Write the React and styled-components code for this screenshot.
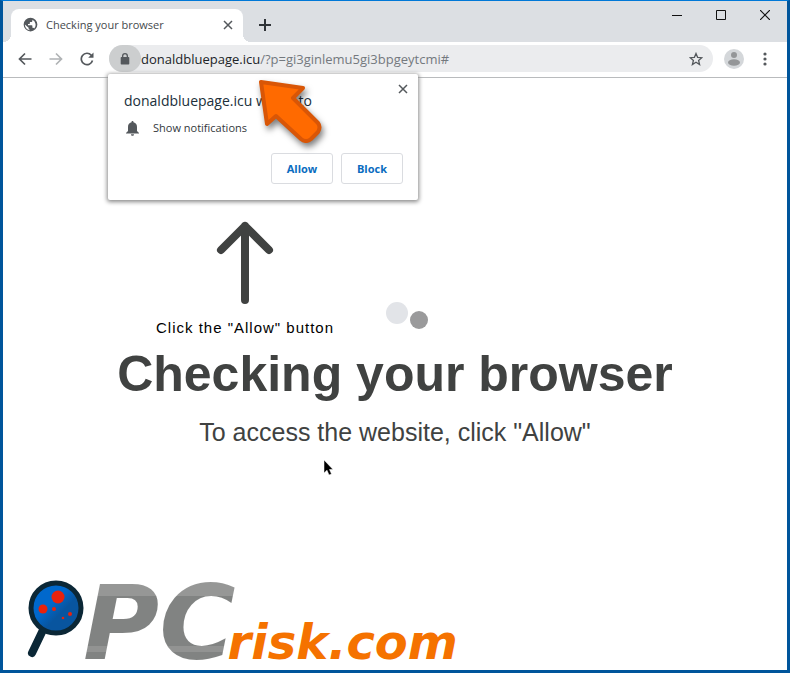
import React from 'react'
import styled, { createGlobalStyle } from 'styled-components'

const GlobalStyle = createGlobalStyle`
    * {
        box-sizing: border-box;
    }
    body {
        margin: 0;
        font-family: "Open Sans", "Noto Sans", sans-serif;
    }
    h1, h2, p {
        margin: 0;
    }
    button {
        font-family: inherit;
        padding: 0;
        border: none;
        background: none;
    }
    svg {
        display: block;
    }
`

const Window = styled.div`
    min-height: 100vh;
    display: flex;
    flex-direction: column;
    background-color: #ffffff;
    border: 3px solid #00559b;
    border-top: 1px solid #0078d7;
`

const TitleBar = styled.header`
    height: 41px;
    display: flex;
    align-items: flex-end;
    padding-left: 8px;
    background-color: #dcdfe3;
`

const Tab = styled.div`
    position: relative;
    width: 232px;
    height: 33px;
    display: flex;
    align-items: center;
    gap: 8px;
    padding: 0 7px 2px 12px;
    border-radius: 8px 8px 0 0;
    background-color: #ffffff;

    &::before,
    &::after {
        content: "";
        position: absolute;
        bottom: 0;
        width: 8px;
        height: 8px;
    }
    &::before {
        left: -8px;
        background: radial-gradient(circle at 0 0, transparent 8px, #ffffff 8px);
    }
    &::after {
        right: -8px;
        background: radial-gradient(circle at 100% 0, transparent 8px, #ffffff 8px);
    }
`

const TabTitle = styled.span`
    flex: 1;
    font-size: 11px;
    line-height: 16px;
    color: #45494d;
    white-space: nowrap;
`

const IconButton = styled.button`
    width: ${props => props.$width || 16}px;
    height: ${props => props.$height || 16}px;
    display: flex;
    align-items: center;
    justify-content: center;
    color: ${props => props.$color || '#54585c'};
`

const NewTab = styled(IconButton)`
    margin: 0 0 9px 14px;
`

const WindowButtons = styled.div`
    display: flex;
    align-self: flex-start;
    margin-left: auto;
`

const Toolbar = styled.div`
    height: 36px;
    display: flex;
    align-items: center;
    padding: 0 2px 2px 12px;
    border-bottom: 1px solid #b9bbbd;
`

const NavButtons = styled.nav`
    display: flex;
    gap: 11px;
`

const AddressBar = styled.div`
    position: relative;
    flex: 1;
    height: 27px;
    display: flex;
    align-items: center;
    margin: 0 10px 0 12px;
    padding-right: 8px;
    border-radius: 14px;
    background-color: #ebecee;
`

const SiteInfo = styled(IconButton)`
    border-radius: 14px;
    background-color: #cccecf;
`

const Url = styled.span`
    flex: 1;
    font-size: 13px;
    line-height: 20px;
    color: #74797e;
    white-space: nowrap;
`

const Host = styled.span`
    color: #202428;
`

const Prompt = styled.section`
    position: absolute;
    z-index: 1;
    top: 29px;
    left: -1px;
    width: 310px;
    padding: 16px 15px 16px 16px;
    border-radius: 2px;
    background-color: #ffffff;
    box-shadow: 0 1px 4px 1px #8a8a8a;
`

const PromptTitle = styled.h2`
    font-size: 14px;
    font-weight: 400;
    line-height: 22px;
    color: #202f3a;
`

const PromptRow = styled.div`
    display: flex;
    align-items: center;
    gap: 12px;
    margin-top: 8px;
    font-size: 11px;
    line-height: 16px;
    color: #33383c;
`

const PromptActions = styled.div`
    display: flex;
    justify-content: flex-end;
    gap: 8px;
    margin-top: 17px;
`

const PromptButton = styled.button`
    width: 62px;
    height: 31px;
    font-size: 11px;
    font-weight: 700;
    color: #0a6cc0;
    && {
        border: 1px solid #dadce0;
        border-radius: 3px;
    }
`

const PromptClose = styled(IconButton)`
    position: absolute;
    top: 7px;
    right: 7px;
`

const Pointer = styled.svg`
    position: absolute;
    top: 2px;
    left: 146px;
    filter: drop-shadow(2px 4px 3px #00000080);
`

const Page = styled.main`
    position: relative;
    flex: 1;
    display: flex;
    flex-direction: column;
    padding-top: 143px;
    font-family: "Liberation Sans", Arial, sans-serif;
    color: #404241;
`

const HintRow = styled.div`
    display: flex;
    justify-content: center;
    gap: 52px;
    padding-right: 206px;
`

const Hint = styled.div`
    display: flex;
    flex-direction: column;
    align-items: center;
    gap: 14px;
`

const HintText = styled.p`
    font-size: 15px;
    line-height: 18px;
    letter-spacing: 1px;
    color: #000000;
`

const Loader = styled.div`
    display: flex;
    align-items: flex-end;
    gap: 2px;
    margin-bottom: 8px;
`

const Dot = styled.span`
    width: ${props => props.$size}px;
    height: ${props => props.$size}px;
    margin-bottom: ${props => props.$lift || 0}px;
    border-radius: 50%;
    background-color: ${props => props.$color};
`

const Heading = styled.h1`
    margin-top: 7px;
    font-size: 50px;
    line-height: 60px;
    text-align: center;
`

const SubHeading = styled.p`
    margin-top: 13px;
    font-size: 25px;
    line-height: 30px;
    text-align: center;
`

const Cursor = styled.svg`
    position: absolute;
    top: 381px;
    left: 320px;
`

const Logo = styled.footer`
    display: flex;
    align-items: baseline;
    margin-top: auto;
    padding: 0 24px 2px;
    font-family: "DejaVu Sans", sans-serif;
    font-weight: 700;
    font-style: oblique;
    white-space: nowrap;
`

const LogoMain = styled.span`
    padding-right: 16px;
    margin-left: -4px;
    font-size: 104px;
    line-height: 90px;
    color: transparent;
    background: linear-gradient(#969796 0 18px, #818382 18px 68px, #929392 68px 74px, #818382 74px);
    background-clip: text;
`

const LogoSub = styled.span`
    margin-left: -24px;
    font-size: 48px;
    line-height: 40px;
    color: #f57200;
`

const CloseIcon = () => (
    <svg width="10" height="10" viewBox="0 0 10 10" stroke="currentColor" strokeWidth="1.5">
        <path d="M1 1l8 8M9 1L1 9" />
    </svg>
)

const GlobeIcon = () => (
    <svg width="15" height="15" viewBox="0 0 24 24" fill="#54585c">
        <path d="M12 1a11 11 0 100 22 11 11 0 000-22zm-1.5 20C6 20 3 16.500 3 12l6 5v1.500c0 1 .5 1.500 1.500 1.500zM18 18.500c-.5-1-1-1.500-2-1.500h-1v-3c0-.7-.4-1-1-1H8v-2h2c.7 0 1-.4 1-1V8h2c1.300 0 2-.8 2-2v-1.500A9 9 0 0118 18.500z" />
    </svg>
)

const Magnifier = () => (
    <svg width="60" height="80" viewBox="0 0 60 80">
        <defs>
            <linearGradient id="lens" x1="0" y1="0" x2="1" y2="1">
                <stop offset="0.4" stopColor="#0068cc" />
                <stop offset="0.6" stopColor="#08559f" />
            </linearGradient>
        </defs>
        <path d="M16 51L5 74" stroke="#0b2736" strokeWidth="8" strokeLinecap="round" />
        <circle cx="29" cy="29" r="25" fill="url(#lens)" stroke="#0b2736" strokeWidth="5" />
        <g fill="#e8220c">
            <circle cx="31" cy="18" r="6.500" />
            <circle cx="16" cy="30" r="4.500" />
            <circle cx="27" cy="30" r="2" />
            <circle cx="43" cy="35" r="2" />
            <circle cx="36" cy="39" r="1.300" />
        </g>
    </svg>
)

const PermissionPrompt = () => {
    return (
        <Prompt>
            <PromptTitle>donaldbluepage.icu wants to</PromptTitle>
            <PromptRow>
                <svg width="17" height="16" viewBox="0 0 17 16" fill="#54585c">
                    <path d="M8.500 1c.7 0 1 .5 1 1.200C12 2.800 13 4.500 13 7v4l2 2v.6H2V13l2-2V7c0-2.500 1-4.200 3.500-4.800C7.500 1.500 7.800 1 8.500 1zM7 14.300h3c0 1-.6 1.500-1.500 1.500S7 15.300 7 14.300z" />
                </svg>
                Show notifications
            </PromptRow>
            <PromptActions>
                <PromptButton>Allow</PromptButton>
                <PromptButton>Block</PromptButton>
            </PromptActions>
            <PromptClose aria-label="Close prompt"><CloseIcon /></PromptClose>
            <Pointer width="74" height="70" viewBox="0 0 74 70">
                <path d="M7 6L49 12L39 22L64 47Q67 51 64 56L57 63Q52 67 47 63L22 40L13 48Z" fill="#ff6a00" stroke="#d95606" strokeWidth="4" strokeLinejoin="round" />
            </Pointer>
        </Prompt>
    )
}

const App = () => {
    return (
        <>
            <GlobalStyle />
            <Window>
                <TitleBar>
                    <Tab>
                        <GlobeIcon />
                        <TabTitle>Checking your browser</TabTitle>
                        <IconButton aria-label="Close tab"><CloseIcon /></IconButton>
                    </Tab>
                    <NewTab aria-label="New tab" $color="#303438">
                        <svg width="12" height="12" viewBox="0 0 12 12" stroke="currentColor" strokeWidth="2">
                            <path d="M6 0v12M0 6h12" />
                        </svg>
                    </NewTab>
                    <WindowButtons>
                        <IconButton aria-label="Minimize" $width={44} $height={28} $color="#111111">
                            <svg width="10" height="10" viewBox="0 0 10 10" stroke="currentColor">
                                <path d="M0 5.500h10" />
                            </svg>
                        </IconButton>
                        <IconButton aria-label="Maximize" $width={44} $height={28} $color="#111111">
                            <svg width="10" height="10" viewBox="0 0 10 10" fill="none" stroke="currentColor">
                                <path d="M.5.5h9v9h-9z" />
                            </svg>
                        </IconButton>
                        <IconButton aria-label="Close window" $width={44} $height={28} $color="#111111">
                            <svg width="10" height="10" viewBox="0 0 10 10" stroke="currentColor" strokeWidth="1.200">
                                <path d="M0 0l10 10M10 0L0 10" />
                            </svg>
                        </IconButton>
                    </WindowButtons>
                </TitleBar>
                <Toolbar>
                    <NavButtons>
                        <IconButton aria-label="Back" $width={20} $height={20}>
                            <svg width="14" height="14" viewBox="0 0 14 14" fill="none" stroke="currentColor" strokeWidth="1.700">
                                <path d="M13.500 7H2M7 1.500L1.500 7 7 12.500" />
                            </svg>
                        </IconButton>
                        <IconButton aria-label="Forward" $width={20} $height={20} $color="#b0b3b5">
                            <svg width="14" height="14" viewBox="0 0 14 14" fill="none" stroke="currentColor" strokeWidth="1.700">
                                <path d="M.5 7H12M7 1.500L12.500 7 7 12.500" />
                            </svg>
                        </IconButton>
                        <IconButton aria-label="Reload" $width={20} $height={20}>
                            <svg width="14" height="14" viewBox="0 0 14 14" fill="none" stroke="currentColor" strokeWidth="1.700">
                                <path d="M12.500 8.500A5.700 5.700 0 1111.300 3.200L12 4" />
                                <path d="M13.500.5v5.300H8.200z" fill="currentColor" stroke="none" />
                            </svg>
                        </IconButton>
                    </NavButtons>
                    <AddressBar>
                        <SiteInfo aria-label="Site information" $width={32} $height={27}>
                            <svg width="10" height="12" viewBox="0 0 10 12" fill="currentColor">
                                <path d="M2 4V3a3 3 0 016 0v1h.5c.5 0 .8.3.8.8v5.900c0 .5-.3.800-.8.800h-7c-.5 0-.8-.3-.8-.800V4.800c0-.5.3-.8.8-.8zM3.300 4h3.400V3a1.700 1.700 0 00-3.400 0z" />
                            </svg>
                        </SiteInfo>
                        <Url><Host>donaldbluepage.icu</Host>/?p=gi3ginlemu5gi3bpgeytcmi#</Url>
                        <IconButton aria-label="Bookmark this page" $width={18} $height={18}>
                            <svg width="14" height="14" viewBox="0 0 14 14" fill="none" stroke="currentColor" strokeWidth="1.300">
                                <path d="M7 1.500l1.600 3.800 4.200.4-3.200 2.700 1 4.100L7 10.300l-3.600 2.200 1-4.100L1.200 5.700l4.200-.4z" />
                            </svg>
                        </IconButton>
                        <PermissionPrompt />
                    </AddressBar>
                    <IconButton aria-label="Profile" $width={22} $height={20}>
                        <svg width="20" height="20" viewBox="0 0 20 20">
                            <circle cx="10" cy="10" r="10" fill="#d4d7da" />
                            <circle cx="10" cy="6" r="3" fill="#949698" />
                            <ellipse cx="10" cy="13.500" rx="6" ry="3.200" fill="#949698" />
                        </svg>
                    </IconButton>
                    <IconButton aria-label="Menu" $width={40} $height={20}>
                        <svg width="4" height="14" viewBox="0 0 4 14" fill="currentColor">
                            <circle cx="2" cy="2" r="1.600" />
                            <circle cx="2" cy="7" r="1.600" />
                            <circle cx="2" cy="12" r="1.600" />
                        </svg>
                    </IconButton>
                </Toolbar>
                <Page>
                    <HintRow>
                        <Hint>
                            <svg width="58" height="84" viewBox="0 0 58 84" fill="none" stroke="#404241" strokeWidth="8" strokeLinecap="round" strokeLinejoin="round">
                                <path d="M29 79V5M5 29L29 5l24 24" />
                            </svg>
                            <HintText>Click the "Allow" button</HintText>
                        </Hint>
                        <Loader>
                            <Dot $size={22} $lift={5} $color="#e2e4e8" />
                            <Dot $size={18} $color="#9a9a9b" />
                        </Loader>
                    </HintRow>
                    <Heading>Checking your browser</Heading>
                    <SubHeading>To access the website, click "Allow"</SubHeading>
                    <Cursor width="12" height="18" viewBox="0 0 12 18">
                        <path d="M1 1v13l3-2.800L6 16l2.500-1-2-4.500H10z" fill="#000000" stroke="#ffffff" strokeWidth="0.500" />
                    </Cursor>
                    <Logo>
                        <Magnifier />
                        <LogoMain>PC</LogoMain>
                        <LogoSub>risk.com</LogoSub>
                    </Logo>
                </Page>
            </Window>
        </>
    )
}

export default App
